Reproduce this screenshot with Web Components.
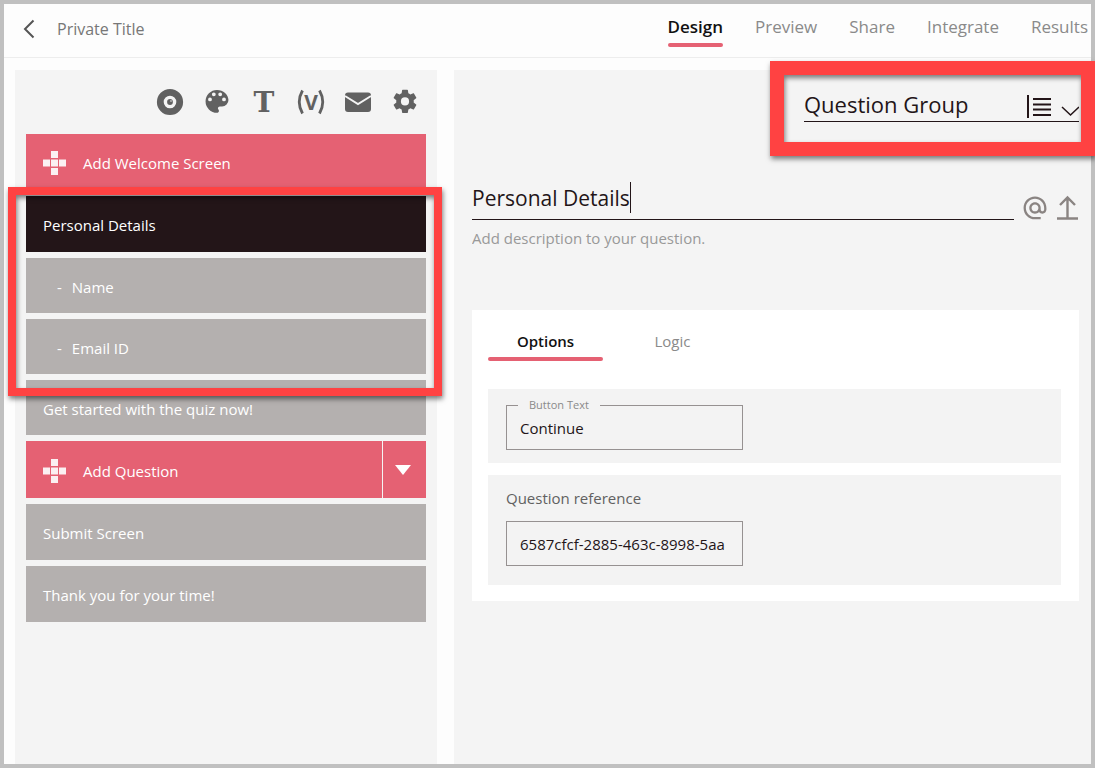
<!DOCTYPE html>
<html lang="en">
<head>
<meta charset="utf-8">
<meta name="viewport" content="width=device-width, initial-scale=1">
<title>Private Title</title>
<style>
  html { height: 100%; }
  body {
    margin: 0;
    min-height: 100%;
    display: grid;
    font: 15px/20px "Open Sans", "Noto Sans", sans-serif;
    color: #231518;
    --accent: #e56173;
    --panel: #f4f4f4;
    --idle: #b4b0af;
    --muted: #8a8a8a;
    --mark: #ff4242;
  }
</style>
</head>
<body>
<quiz-app></quiz-app>
<script>
const define = (name, html) => {
  const template = document.createElement('template');
  template.innerHTML = '<style>*{box-sizing:border-box}button,input,select{font:inherit;color:inherit;margin:0;border:0;background:none;padding:0;outline:0}button{cursor:pointer}svg{display:block}</style>' + html;
  customElements.define(name, class extends HTMLElement {
    constructor() {
      super();
      this.attachShadow({ mode: 'open' }).append(template.content.cloneNode(true));
    }
    connectedCallback() {
      const input = this.shadowRoot.querySelector('input');
      const label = this.shadowRoot.querySelector('label');
      if (!input || !label) return;
      input.value = this.getAttribute('value') || '';
      label.textContent = this.getAttribute('label') || '';
      if (this.hasAttribute('name')) input.setAttribute('aria-label', this.getAttribute('name'));
    }
  });
};

/* Red frame that surrounds whatever it is placed in */
define('call-out', `
<style>
  :host {
    position: absolute; z-index: 2; pointer-events: none; box-sizing: border-box;
    border: 8px solid var(--mark);
    box-shadow: 1px 3px 5px rgba(0,0,0,.5), inset 1px 3px 5px rgba(0,0,0,.5);
  }
</style>`);

define('nav-tab', `
<style>
  :host { display: block; }
  a { display: block; color: var(--muted); text-decoration: none; font-weight: 500; }
  slot { display: block; padding-bottom: 6px; }
  :host([active]) a { color: #111; font-weight: 600; }
  :host([active]) a::after { content: ""; display: block; height: 4px; border-radius: 2px; background: var(--accent); }
  :host([wide]) a { text-align: center; }
</style>
<a href="#"><slot></slot></a>`);

define('app-header', `
<style>
  :host { display: flex; align-items: flex-start; justify-content: space-between; height: 54px; padding: 0 3px 0 18px; border-bottom: 1px solid #ededed; background: #fdfdfd; }
  .title { display: flex; gap: 20px; padding-top: 14px; color: #777; font-size: 16px; line-height: 22px; }
  nav { display: flex; gap: 32px; padding-top: 13px; font-size: 17px; }
</style>
<div class="title">
  <button aria-label="Back"><svg width="15" height="20" viewBox="0 0 15 20" fill="none" stroke="#555" stroke-width="2"><path d="M11.500 1.500 3 10l8.500 8.500"/></svg></button>
  <span>Private Title</span>
</div>
<nav aria-label="Main">
  <nav-tab active>Design</nav-tab><nav-tab>Preview</nav-tab><nav-tab>Share</nav-tab><nav-tab>Integrate</nav-tab><nav-tab>Results</nav-tab>
</nav>`);

define('tool-bar', `
<style>
  :host { display: flex; justify-content: flex-end; gap: 19px; padding: 18px 7px 18px 0; color: #616161; }
  button { width: 28px; height: 28px; display: grid; place-items: center; }
  .t { font: bold 28px/30px "DejaVu Serif", serif; }
  .v { position: relative; font: bold 21px/28px "Open Sans", sans-serif; }
  .v svg { position: absolute; inset: 0; }
</style>
<button aria-label="Preview"><svg width="28" height="28" viewBox="0 0 28 28"><circle cx="14" cy="14" r="9.700" fill="none" stroke="currentColor" stroke-width="6.800"/><circle cx="14" cy="14" r="2.900" fill="currentColor"/><circle cx="15" cy="13" r=".8" fill="#eee"/></svg></button>
<button aria-label="Theme"><svg width="28" height="28" viewBox="1 1.500 22 22" fill="currentColor"><path d="M12 3a9 9 0 0 0 0 18c.83 0 1.500-.67 1.500-1.500 0-.39-.15-.74-.39-1.010-.23-.26-.38-.61-.38-.99 0-.83.67-1.500 1.500-1.500H16a5 5 0 0 0 5-5c0-4.420-4.030-8-9-8zm-5.500 9a1.500 1.500 0 1 1 0-3 1.500 1.500 0 0 1 0 3zm3-4a1.500 1.500 0 1 1 0-3 1.500 1.500 0 0 1 0 3zm5 0a1.500 1.500 0 1 1 0-3 1.500 1.500 0 0 1 0 3zm3 4a1.500 1.500 0 1 1 0-3 1.500 1.500 0 0 1 0 3z"/></svg></button>
<button class="t" aria-label="Text">T</button>
<button class="v" aria-label="Variables"><svg width="28" height="28" viewBox="0 0 28 28" fill="none" stroke="currentColor" stroke-width="2.800"><path d="M5.500 2.500Q-1 14 5.500 25.500M22.500 2.500Q29 14 22.500 25.500"/></svg>V</button>
<button aria-label="Email"><svg width="28" height="28" viewBox="0 0 28 28"><rect x="1" y="4.500" width="26" height="19.500" rx="3" fill="currentColor"/><path d="m1 8 13 8 13-8" fill="none" stroke="#f4f4f4" stroke-width="2"/></svg></button>
<button aria-label="Settings"><svg width="28" height="28" viewBox="0 0.500 24 24" fill="currentColor"><path d="M19.430 12.980c.04-.32.07-.64.07-.98s-.03-.66-.07-.98l2.110-1.650c.19-.15.24-.42.12-.64l-2-3.460c-.12-.22-.39-.3-.61-.22l-2.490 1c-.52-.4-1.080-.73-1.690-.98l-.38-2.650A.49.49 0 0 0 14 2h-4c-.25 0-.46.18-.49.42l-.38 2.650c-.61.25-1.170.59-1.690.98l-2.490-1c-.23-.09-.49 0-.61.22l-2 3.460c-.13.22-.07.49.12.64l2.110 1.650c-.04.32-.07.65-.07.98s.03.66.07.98l-2.110 1.650c-.19.15-.24.42-.12.64l2 3.460c.12.22.39.3.61.22l2.490-1c.52.4 1.080.73 1.690.98l.38 2.650c.03.24.24.42.49.42h4c.25 0 .46-.18.49-.42l.38-2.650c.61-.25 1.170-.59 1.690-.98l2.490 1c.23.09.49 0 .61-.22l2-3.460c.12-.22.07-.49-.12-.64l-2.110-1.650zM12 15.500a3.500 3.500 0 1 1 0-7 3.500 3.500 0 0 1 0 7z"/></svg></button>`);

define('screen-item', `
<style>
  :host { display: block; }
  button { display: block; width: 100%; height: 56px; padding: 2px 17px 0; text-align: left; color: #fff; background: var(--idle); }
  :host([current]) button { background: #231518; }
  :host([question]) button { height: 55px; }
  :host([child]) button { height: 55px; padding-left: 31px; }
  :host([child]) button::before { content: "-"; margin-right: 10px; }
</style>
<button><slot></slot></button>`);

define('add-item', `
<style>
  :host { display: flex; gap: 1px; height: 56px; }
  :host([menu]) { height: 57px; }
  button { background: var(--accent); color: #fff; }
  .add { flex: 1; display: flex; align-items: center; gap: 17px; padding: 2px 17px 0; text-align: left; }
  .more { display: none; width: 43px; place-items: center; padding-right: 4px; }
  :host([menu]) .more { display: grid; }
</style>
<button class="add"><svg width="23" height="24" viewBox="0 0 23 24" fill="#fbf0f2"><path d="M8 0h7v7H8zM0 8.500h7v7H0zM8 8.500h7v7H8zM16 8.500h7v7h-7zM8 17h7v7H8z"/></svg><slot></slot></button>
<button class="more" aria-label="More question types"><svg width="16" height="10" viewBox="0 0 16 10" fill="#fff"><path d="M0 0h16L8 10z"/></svg></button>`);

define('screen-list', `
<style>
  :host { display: block; padding: 0 11px 16px; background: var(--panel); }
  .list, .group { display: grid; gap: 6px; }
  .group { position: relative; }
  call-out { inset: -9px -16px -22px -18px; }
</style>
<tool-bar></tool-bar>
<div class="list">
  <add-item>Add Welcome Screen</add-item>
  <div class="group">
    <screen-item current>Personal Details</screen-item>
    <screen-item child>Name</screen-item>
    <screen-item child>Email ID</screen-item>
    <call-out></call-out>
  </div>
  <screen-item question>Get started with the quiz now!</screen-item>
  <add-item menu>Add Question</add-item>
  <screen-item>Submit Screen</screen-item>
  <screen-item>Thank you for your time!</screen-item>
</div>`);

define('type-picker', `
<style>
  :host { display: block; position: relative; width: 275px; }
  .box { display: grid; grid-template-columns: 1fr; height: 36px; border-bottom: 1px solid #231518; }
  select { appearance: none; grid-area: 1/1; font-size: 22px; line-height: 32px; color: #231518; }
  svg { grid-area: 1/1; justify-self: end; align-self: end; pointer-events: none; }
  call-out { inset: -25px -16px -34px -34px; border-width: 14px; }
</style>
<div class="box">
  <select aria-label="Question type"><option>Question Group</option></select>
  <svg width="52" height="28" viewBox="0 0 52 28" fill="none" stroke="#231518"><path d="M1 2v23" stroke-width="2"/><path d="M6 6h18M6 11.500h18M6 16.500h18M6 22h18" stroke-width="1.800"/><path d="m35 14 8.500 8L52 14" stroke-width="1.500"/></svg>
</div>
<call-out></call-out>`);

define('question-title', `
<style>
  :host { display: flex; align-items: flex-end; gap: 9px; }
  .field { flex: 1; min-width: 0; display: flex; height: 38px; border-bottom: 1px solid #231518; }
  .field input { field-sizing: content; height: 32px; font-size: 21px; line-height: 32px; color: #231518; }
  .caret { width: 1px; height: 31px; background: #231518; }
  .tools { display: flex; gap: 9px; color: #8a8482; }
</style>
<div class="field"><input aria-label="Question title" value="Personal Details"><span class="caret"></span></div>
<div class="tools">
  <button aria-label="Mention"><svg width="24" height="24" viewBox="1.500 1.500 21 21" fill="currentColor"><path d="M12 1.950c-5.520 0-10 4.480-10 10s4.480 10 10 10h5v-2h-5c-4.340 0-8-3.660-8-8s3.660-8 8-8 8 3.660 8 8v1.430c0 .79-.71 1.570-1.500 1.570s-1.500-.78-1.500-1.570v-1.430c0-2.760-2.240-5-5-5s-5 2.240-5 5 2.240 5 5 5c1.380 0 2.640-.56 3.540-1.470.65.89 1.770 1.470 2.960 1.470 1.970 0 3.500-1.600 3.500-3.570v-1.430c0-5.520-4.480-10-10-10zm0 13c-1.660 0-3-1.340-3-3s1.340-3 3-3 3 1.340 3 3-1.340 3-3 3z"/></svg></button>
  <button aria-label="Upload"><svg width="23" height="25" viewBox="0 0 23 25" fill="none" stroke="currentColor" stroke-width="2.400"><path d="M1 23.500h21M11.500 23V3M4 10l7.500-7.500L19 10"/></svg></button>
</div>`);

define('text-field', `
<style>
  :host { display: block; position: relative; width: 237px; }
  label { position: absolute; left: 12px; top: -10px; padding: 0 11px; font-size: 11px; color: var(--muted); background: #f3f3f3; }
  label:empty { display: none; }
  input { display: block; width: 100%; height: 45px; border: 1px solid #969191; padding: 0 13px; color: #231518; }
</style>
<input id="f"><label for="f"></label>`);

define('option-card', `
<style>
  :host { display: block; padding: 21px 18px 16px 16px; background: #fff; }
  .tabs { display: flex; gap: 12px; margin-bottom: 28px; }
  nav-tab { width: 115px; }
  section { padding: 16px 18px 13px; background: #f3f3f3; }
  section + section { margin-top: 12px; padding: 13px 18px 19px; }
  h2 { margin: 0 0 13px; font: inherit; color: #616161; }
</style>
<div class="tabs"><nav-tab wide active>Options</nav-tab><nav-tab wide>Logic</nav-tab></div>
<section><text-field label="Button Text" value="Continue"></text-field></section>
<section><h2>Question reference</h2><text-field name="Question reference" value="6587cfcf-2885-463c-8998-5aa"></text-field></section>`);

define('question-editor', `
<style>
  :host { display: block; padding: 16px 12px 24px 18px; background: var(--panel); }
  type-picker { margin-left: auto; }
  question-title { margin-top: 60px; }
  .desc { display: block; width: 100%; height: 24px; margin: 6px 0 60px; }
  .desc::placeholder { color: #999; opacity: 1; }
</style>
<type-picker></type-picker>
<question-title></question-title>
<input class="desc" aria-label="Description" placeholder="Add description to your question.">
<option-card></option-card>`);

define('quiz-app', `
<style>
  :host { display: flex; flex-direction: column; min-width: 0; box-sizing: border-box; border: 4px solid #c0c0c0; background: #fdfdfd; }
  main { flex: 1; display: grid; grid-template-columns: minmax(300px, 422fr) minmax(0, 637fr); gap: 17px; padding: 12px 0 0 11px; }
</style>
<app-header></app-header>
<main><screen-list></screen-list><question-editor></question-editor></main>`);
</script>
</body>
</html>
